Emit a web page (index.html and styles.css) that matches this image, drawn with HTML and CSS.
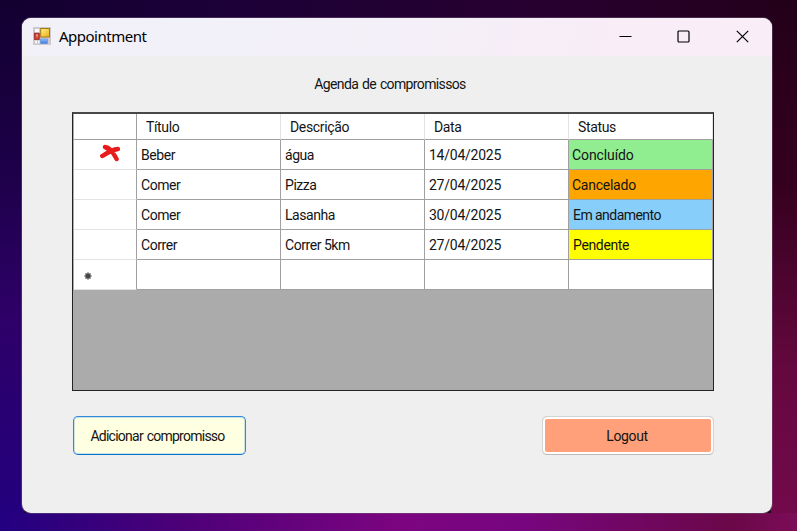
FILE: index.html
```
<!DOCTYPE html>
<html lang="pt-BR">
<head>
<meta charset="utf-8">
<title>Appointment</title>
<link rel="stylesheet" href="styles.css">
</head>
<body>
<main class="window">
  <header class="titlebar">
    <svg class="app-icon" width="18" height="18" viewBox="0 0 18 18">
      <defs>
        <linearGradient id="gold" x1="0" y1="0" x2="1" y2="1"><stop offset="0" stop-color="#fff08a"/><stop offset="1" stop-color="#e9ae12"/></linearGradient>
        <linearGradient id="blue" x1="0" y1="0" x2="0" y2="1"><stop offset="0" stop-color="#8fbcff"/><stop offset="1" stop-color="#3a78dc"/></linearGradient>
      </defs>
      <rect width="18" height="18" fill="#cbc9ce"/>
      <path d="M2 2h4v3h-4zM2 13.800h2v2.500h-2zM5 13.800h1.300v2.500h-1.300z" fill="#fafafa"/>
      <rect x="1.300" y="6.200" width="5" height="6.300" fill="#c93d32" stroke="#96221e" stroke-width=".7"/>
      <path d="M3 8h2M4 8v2.500" stroke="#f1aaa2" stroke-width="1"/>
      <rect x="7.700" y="1.500" width="8.800" height="8.500" fill="url(#gold)" stroke="#a8770d"/>
      <rect x="7.500" y="12" width="7" height="4.500" fill="url(#blue)" stroke="#5d8fdd" stroke-width=".6"/>
    </svg>
    <span class="app-name">Appointment</span>
    <div class="controls">
      <svg width="13" height="13" viewBox="0 0 13 13"><path d="M.5 6.500h12" class="stroke"/></svg>
      <svg width="13" height="13" viewBox="0 0 13 13"><rect x="1" y="1" width="11" height="11" rx="1" class="stroke"/></svg>
      <svg width="13" height="13" viewBox="0 0 13 13"><path d="M.8.8l11.400 11.400M12.200.8L.8 12.200" class="stroke"/></svg>
    </div>
  </header>
  <h1 class="heading">Agenda de compromissos</h1>
  <section class="datagrid">
    <div class="row head"><div class="handle"></div><div>Título</div><div>Descrição</div><div>Data</div><div>Status</div></div>
    <div class="row">
      <div class="handle mark"><svg width="22" height="18" viewBox="0 0 22 18"><path d="M6 3C10 3.500 12.500 6 17.600 15M3.200 12C7 10.500 10 6 18.900 5M6 3L12 6.500" fill="none" stroke="#e81c1c" stroke-width="4.400" stroke-linecap="round" stroke-linejoin="round"/></svg></div>
      <div>Beber</div><div>água</div><div class="date">14/04/2025</div><div class="done">Concluído</div>
    </div>
    <div class="row"><div class="handle"></div><div>Comer</div><div>Pizza</div><div class="date">27/04/2025</div><div class="cancelled">Cancelado</div></div>
    <div class="row"><div class="handle"></div><div>Comer</div><div>Lasanha</div><div class="date">30/04/2025</div><div class="progress">Em andamento</div></div>
    <div class="row"><div class="handle"></div><div>Correr</div><div>Correr 5km</div><div class="date">27/04/2025</div><div class="pending">Pendente</div></div>
    <div class="row blank"><div class="handle star"><svg width="8" height="8" viewBox="0 0 8 8"><path d="M4 .5v7M.5 4h7M1.500 1.500l5 5M6.500 1.500l-5 5" stroke="#484848" stroke-width="1.500"/></svg></div><div></div><div></div><div></div><div></div></div>
  </section>
  <footer class="actions">
    <button class="add">Adicionar compromisso</button>
    <button class="logout">Logout</button>
  </footer>
</main>
</body>
</html>
```
FILE: styles.css
```
* { box-sizing: border-box; }
body {
  margin: 0;
  height: 531px;
  padding: 18px 25px 18px 22px;
  overflow: hidden;
  background:
    linear-gradient(90deg, #220080 0%, #4b0078 22%, #7c0480 50%, #780580 65%, #6a0848 92%, #7c0c58 100%) 0 100% / 100% 18px no-repeat,
    linear-gradient(180deg, #23001a 0%, #35001f 35%, #65083f 70%, #74094c 100%) 100% 0 / 26px 100% no-repeat,
    linear-gradient(180deg, #130030 0%, #1c0047 30%, #2e0068 60%, #220080 100%) 0 0 / 24px 100% no-repeat,
    linear-gradient(90deg, #130030 0%, #1b0038 25%, #28002f 70%, #23001a 100%);
  font-family: Roboto, sans-serif;
  font-size: 14px;
  color: #141414;
}
.window {
  height: 495px;
  border-radius: 9px;
  background: #efefef;
  overflow: hidden;
  box-shadow: 0 0 0 1px rgba(110, 90, 120, .45);
}
.titlebar {
  height: 38px;
  display: flex;
  align-items: center;
  padding: 0 23.500px 0 11px;
  background: linear-gradient(100deg, #f2f1f8, #f3f0f8 45%, #f9edf7 80%);
}
.app-icon { margin-top: -2px; }
.app-name {
  margin: -2px 0 0 8px;
  font: 15px/20px "Noto Sans", sans-serif;
  letter-spacing: -.5px;
  color: #000;
}
.controls { margin: -1px 0 0 auto; display: flex; gap: 45.500px; }
.stroke { fill: none; stroke: #000; stroke-width: 1.200; }
.heading {
  margin: 18px 0 18px;
  padding-right: 14px;
  font-size: 14px;
  line-height: 20px;
  font-weight: 400;
  letter-spacing: -.63px;
  word-spacing: 1px;
  text-align: center;
}
.datagrid {
  width: 642px;
  height: 279px;
  margin-left: 50px;
  padding-left: 1px;
  border: 1px solid #242424;
  border-top: 2px solid #484848;
  background: #ababab;
}
.row {
  display: grid;
  grid-template-columns: 63px repeat(4, 144px);
  grid-template-rows: 100%;
  height: 30px;
}
.row > div {
  padding-left: 4px;
  border-right: 1px solid #a0a0a0;
  border-bottom: 1px solid #a0a0a0;
  background-color: #fff;
  line-height: 30px;
  letter-spacing: -.45px;
  white-space: nowrap;
}
.row.head { height: 26px; }
.row.head > div { padding-left: 9px; line-height: 27px; letter-spacing: -.35px; border-right-color: #e3e3e3; }
.row.head > .handle { border-right-color: #a0a0a0; }
.row > .handle { padding: 0; display: flex; }
.row:not(.head) > .handle { border-bottom-color: #e3e3e3; }
.row > .date { letter-spacing: -.25px; }
.handle.mark svg { margin: 4px 0 0 25px; }
.handle.star svg { margin: 12px 0 0 10px; }
.row > .done { background-color: #90ee90; letter-spacing: -.1px; }
.row > .cancelled { background-color: #ffa500; letter-spacing: -.25px; }
.row > .progress { background-color: #87cefa; letter-spacing: -.55px; }
.row > .pending { background-color: #ff0; letter-spacing: -.35px; }
.row > .done, .row > .cancelled { padding-left: 3px; }
.actions {
  display: flex;
  justify-content: space-between;
  margin: 25px 58px 0 51px;
}
button {
  height: 39px;
  padding: 0;
  border-radius: 5px;
  font: inherit;
  letter-spacing: -.35px;
  color: #141414;
}
.add {
  width: 173px;
  padding-right: 4px;
  border: 1px solid #2b8ade;
  border-bottom-color: #0873cc;
  background: #ffffe1;
  letter-spacing: -.75px;
  word-spacing: 1px;
  box-shadow: inset 0 0 0 1px rgba(43, 138, 222, .25);
}
.logout {
  width: 172px;
  padding-right: 2px;
  border: 1px solid #d3d3d3;
  border-bottom-color: #bcbcbc;
  background: #ffa07a;
  box-shadow: inset 0 0 0 2px #fff;
}
```
